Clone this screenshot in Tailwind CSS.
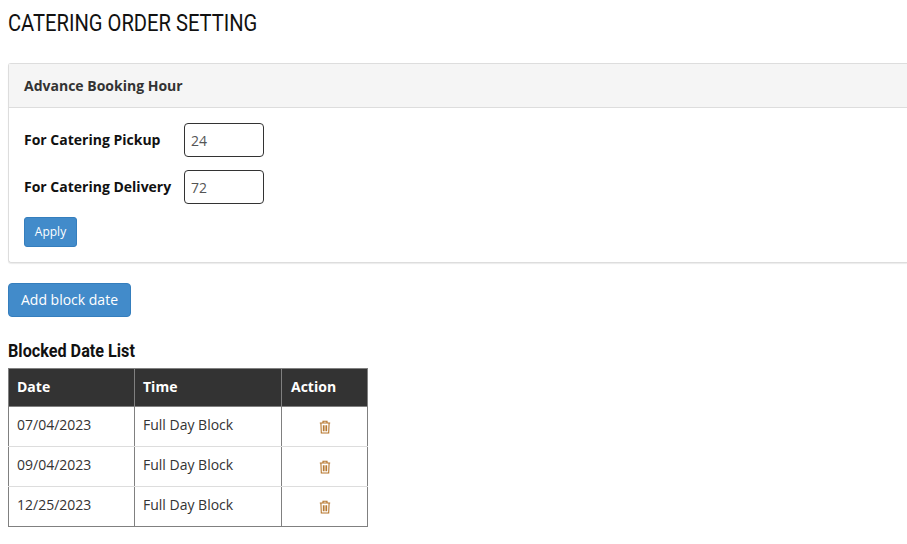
<!DOCTYPE html>
<html>

<head>
    <meta charset='utf-8'>
    <title>Catering order setting</title>
    <script src="https://cdn.jsdelivr.net/npm/@tailwindcss/browser@4"></script>
</head>

<body class="bg-white overflow-hidden font-['Open_Sans',sans-serif] h-[544px]">
    <div class="pl-2 pt-[10px]">
        <h1 class="h-[26px] leading-[26px] text-[24px] font-normal font-['Roboto',sans-serif] text-[#111] uppercase origin-left scale-x-[0.84] whitespace-nowrap">Catering order setting</h1>

        <div class="mt-[27px] border border-r-0 border-[#ddd] rounded-l-[3px] shadow-[0_1px_1px_rgba(0,0,0,0.08)] h-[200px]">
            <div class="h-[44px] bg-[#f5f5f5] border-b border-[#ddd] pl-[15px] flex items-center text-[14px] font-bold text-[#333]">Advance Booking Hour</div>
            <div class="pl-[15px] pt-[15px]">
                <div class="flex items-center h-[34px]">
                    <label class="w-[160px] text-[14px] font-bold text-[#111] pb-[2px]">For Catering Pickup</label>
                    <input value="24" class="w-[80px] h-[34px] border border-[#333] rounded-[4px] px-[6px] text-[14px] text-[#555]">
                </div>
                <div class="flex items-center h-[34px] mt-[13px]">
                    <label class="w-[160px] text-[14px] font-bold text-[#111] pb-[2px]">For Catering Delivery</label>
                    <input value="72" class="w-[80px] h-[34px] border border-[#333] rounded-[4px] px-[6px] text-[14px] text-[#555]">
                </div>
                <button class="block mt-[13px] w-[53px] h-[30px] bg-[#428bca] border border-[#357ebd] rounded-[3px] text-white text-[12px]">Apply</button>
            </div>
        </div>

        <button class="block mt-[20px] w-[123px] h-[34px] bg-[#428bca] border border-[#357ebd] rounded-[4px] text-white text-[14px] pb-[2px]">Add block date</button>

        <h2 class="mt-[24px] h-[20px] leading-[20px] text-[18px] font-bold font-['Roboto',sans-serif] text-[#111] origin-left scale-x-[0.9] whitespace-nowrap">Blocked Date List</h2>

        <table class="mt-[7px] w-[359px] table-fixed border-collapse border border-[#808080] text-[14px] text-[#333]">
            <colgroup>
                <col class="w-[126px]">
                <col class="w-[147px]">
                <col class="w-[86px]">
            </colgroup>
            <thead>
                <tr class="h-[38px] bg-[#333] text-white text-left">
                    <th class="border border-[#808080] pl-2 pb-[2px] font-bold">Date</th>
                    <th class="border border-[#808080] pl-2 pb-[2px] font-bold">Time</th>
                    <th class="border border-[#808080] pl-[9px] pb-[2px] font-bold">Action</th>
                </tr>
            </thead>
            <tbody>
                <tr class="h-[40px]">
                    <td class="border-r border-b border-r-[#808080] border-b-[#ddd] pl-2 pb-[4px]">07/04/2023</td>
                    <td class="border-r border-b border-r-[#808080] border-b-[#ddd] pl-2 pb-[4px]">Full Day Block</td>
                    <td class="border-b border-b-[#ddd]">
                        <svg class="block mx-auto mt-[1px] w-[12px] h-[14px] text-[#b5752a]" viewBox="0 0 12 14" fill="none" stroke="currentColor" stroke-width="1.1">
                            <path d="M0.8 3h10.4M4 3V1.2h4V3M1.9 3l.4 10h7.4l.4-10M4.4 5.2v6M6 5.2v6M7.6 5.2v6"></path>
                        </svg>
                    </td>
                </tr>
                <tr class="h-[40px]">
                    <td class="border-r border-b border-r-[#808080] border-b-[#ddd] pl-2 pb-[4px]">09/04/2023</td>
                    <td class="border-r border-b border-r-[#808080] border-b-[#ddd] pl-2 pb-[4px]">Full Day Block</td>
                    <td class="border-b border-b-[#ddd]">
                        <svg class="block mx-auto mt-[1px] w-[12px] h-[14px] text-[#b5752a]" viewBox="0 0 12 14" fill="none" stroke="currentColor" stroke-width="1.1">
                            <path d="M0.8 3h10.4M4 3V1.2h4V3M1.9 3l.4 10h7.4l.4-10M4.4 5.2v6M6 5.2v6M7.6 5.2v6"></path>
                        </svg>
                    </td>
                </tr>
                <tr class="h-[40px]">
                    <td class="border-r border-r-[#808080] pl-2 pb-[4px]">12/25/2023</td>
                    <td class="border-r border-r-[#808080] pl-2 pb-[4px]">Full Day Block</td>
                    <td>
                        <svg class="block mx-auto mt-[1px] w-[12px] h-[14px] text-[#b5752a]" viewBox="0 0 12 14" fill="none" stroke="currentColor" stroke-width="1.1">
                            <path d="M0.8 3h10.4M4 3V1.2h4V3M1.9 3l.4 10h7.4l.4-10M4.4 5.2v6M6 5.2v6M7.6 5.2v6"></path>
                        </svg>
                    </td>
                </tr>
            </tbody>
        </table>
    </div>
</body>

</html>
